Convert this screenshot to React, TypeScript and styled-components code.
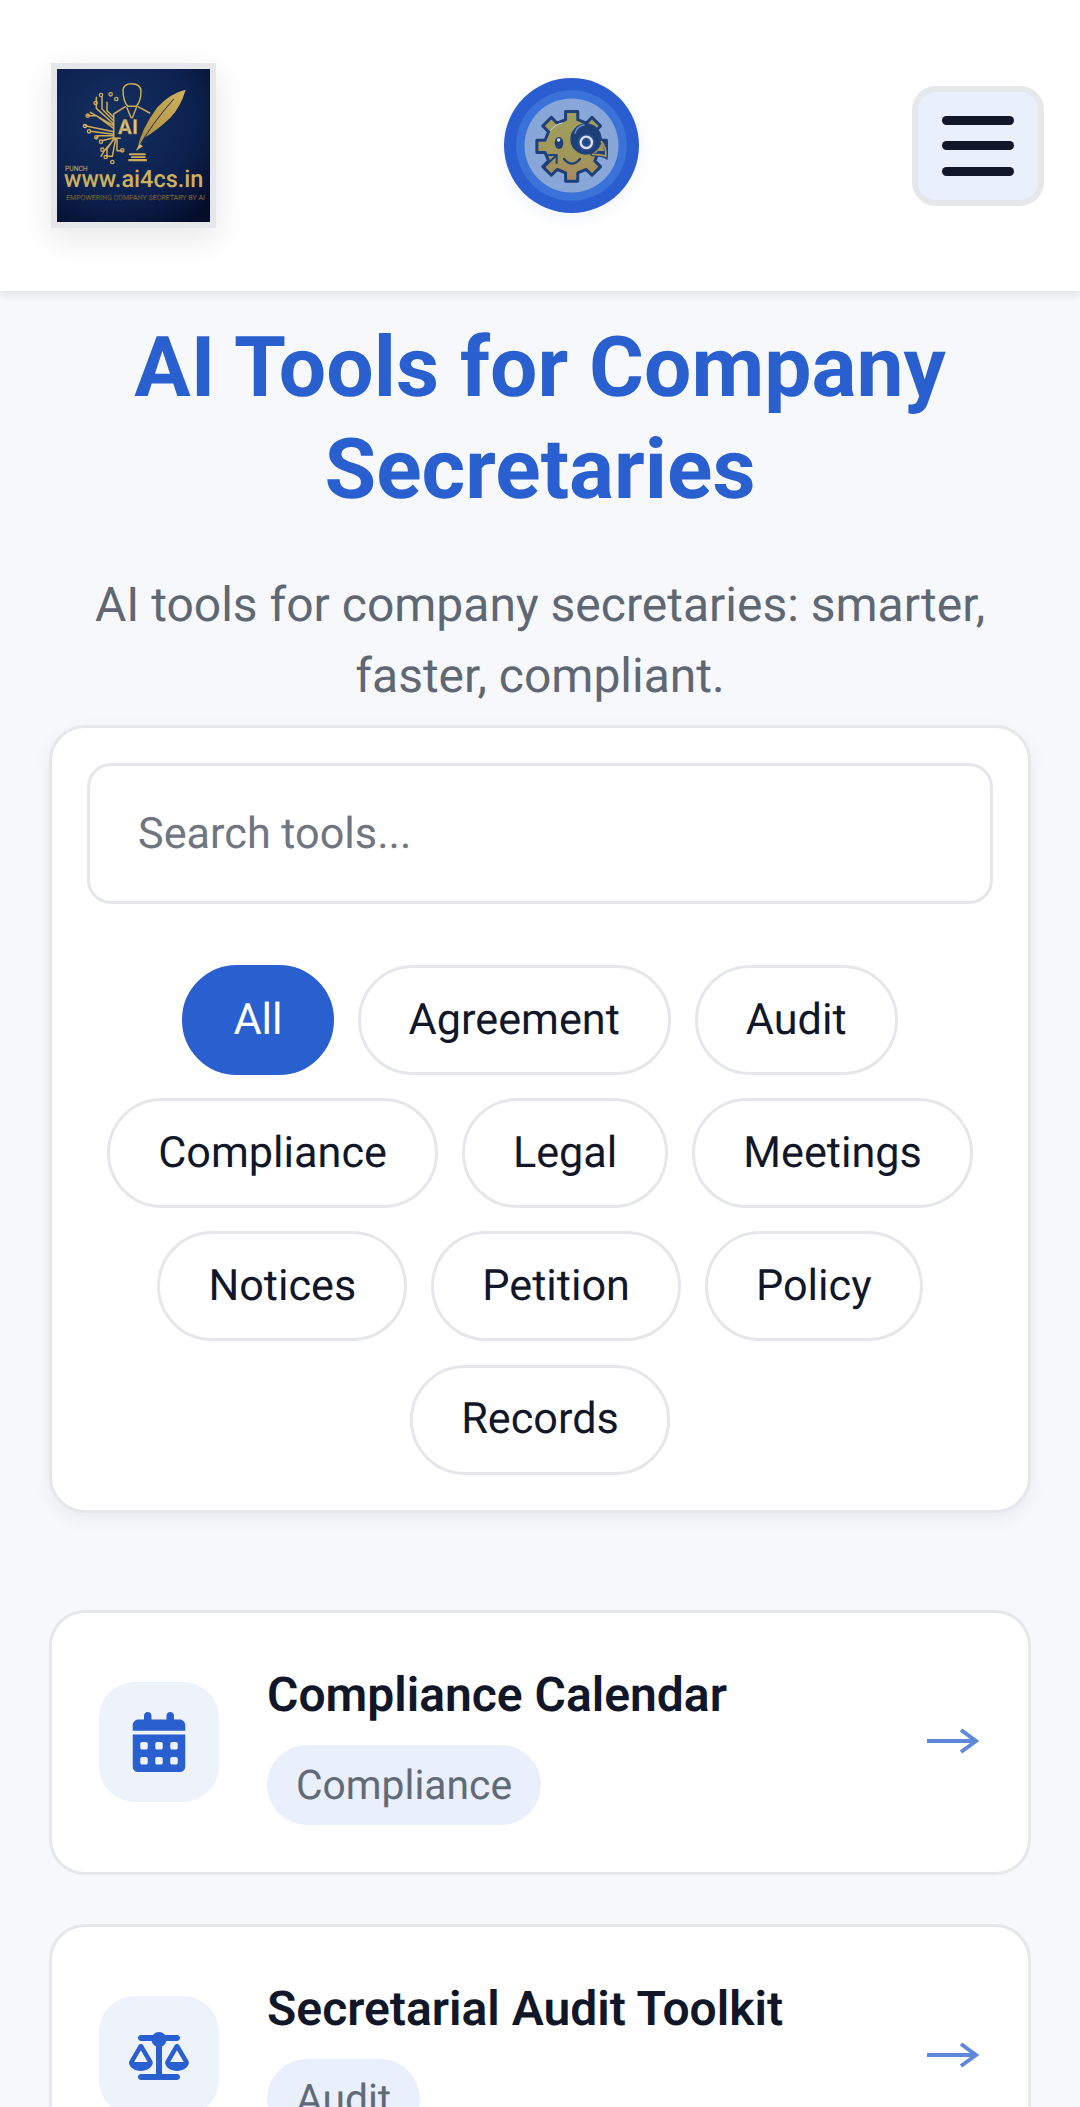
import React from "react";
import styled, { createGlobalStyle } from "styled-components";
import { FaCalendarDays, FaScaleBalanced } from "react-icons/fa6";

const Global = createGlobalStyle`
  * { box-sizing: border-box; }
  html, body { margin: 0; padding: 0; background: #f6f8fc; }
  body {
    font-family: Roboto, "Liberation Sans", sans-serif;
    color: #111827;
    text-rendering: geometricPrecision;
  }
`;

const Page = styled.div`
  width: 1080px;
  height: 2107px;
  overflow: hidden;
`;

const Header = styled.header`
  height: 291px;
  background: #fff;
  padding: 0 36px 0 51px;
  display: flex;
  align-items: center;
  justify-content: space-between;
  box-shadow: 0 3px 9px rgba(17, 24, 39, 0.1);
`;

const BrandFrame = styled.div`
  width: 165px;
  height: 165px;
  border: 6px solid #e5e7eb;
  box-shadow: 0 10px 30px rgba(17, 24, 39, 0.1);
  flex: none;
  svg { display: block; width: 153px; height: 153px; }
`;

const Mascot = styled.div`
  width: 135px;
  height: 135px;
  margin-left: 14px;
  border-radius: 50%;
  box-shadow: 0 4px 16px rgba(42, 95, 208, 0.08);
  flex: none;
  svg { display: block; width: 135px; height: 135px; }
`;

const MenuButton = styled.button`
  width: 132px;
  height: 120px;
  border: 6px solid #e5e7eb;
  border-radius: 24px;
  background: #e9effb;
  padding: 0;
  display: flex;
  flex-direction: column;
  align-items: center;
  justify-content: center;
  gap: 16.5px;
  flex: none;
`;

const MenuBar = styled.span`
  display: block;
  width: 72px;
  height: 9px;
  border-radius: 5px;
  background: #111729;
`;

const Main = styled.main`
  padding: 26px 49px 0;
`;

const Title = styled.h1`
  margin: 0 0 48px;
  font-size: 84px;
  line-height: 102px;
  font-weight: 700;
  text-align: center;
  color: #2a5fd0;
`;

const Subtitle = styled.p`
  margin: 0 0 14px;
  font-size: 48px;
  line-height: 71px;
  font-weight: 400;
  text-align: center;
  color: #5f6773;
`;

const FilterCard = styled.section`
  background: #fff;
  border: 3px solid #e5e7eb;
  border-radius: 36px;
  padding: 35px;
  box-shadow: 0 6px 18px rgba(17, 24, 39, 0.06);
`;

const Search = styled.input`
  display: block;
  width: 100%;
  height: 141px;
  border: 3px solid #e5e7eb;
  border-radius: 24px;
  background: #fff;
  padding: 0 48px;
  font-family: inherit;
  font-size: 43.2px;
  color: #111827;
  outline: none;
  text-rendering: geometricPrecision;
  &::placeholder { color: #6f7682; opacity: 1; }
`;

const Chips = styled.div`
  margin-top: 61px;
  display: flex;
  flex-wrap: wrap;
  justify-content: center;
  gap: 23.2px 24px;
`;

const Chip = styled.button<{ $active?: boolean }>`
  height: 110px;
  padding: 0 48px 2px;
  border: 3px solid ${(p) => (p.$active ? "#2a5fd0" : "#e5e7eb")};
  border-radius: 55px;
  background: ${(p) => (p.$active ? "#2a5fd0" : "#fff")};
  color: ${(p) => (p.$active ? "#fff" : "#111729")};
  font-family: inherit;
  font-size: 43.2px;
  font-weight: 400;
  text-rendering: geometricPrecision;
`;

const ToolList = styled.div`
  margin-top: 97px;
  display: flex;
  flex-direction: column;
  gap: 49px;
`;

const ToolCard = styled.article`
  height: 265px;
  flex: none;
  background: #fff;
  border: 3px solid #e5e7eb;
  border-radius: 36px;
  padding: 0 47px;
  display: flex;
  align-items: center;
  gap: 48px;
`;

const IconBox = styled.div`
  width: 120px;
  height: 120px;
  flex: none;
  border-radius: 36px;
  background: #edf2fb;
  color: #2a5fd0;
  display: flex;
  align-items: center;
  justify-content: center;
`;

const ToolBody = styled.div`
  flex: 1;
  display: flex;
  flex-direction: column;
  align-items: flex-start;
  gap: 14px;
`;

const ToolName = styled.h2`
  margin: 0;
  font-size: 48px;
  line-height: 72px;
  font-weight: 600;
  color: #111729;
`;

const Tag = styled.span`
  height: 80px;
  padding: 0 29px;
  border-radius: 40px;
  background: #e9effb;
  color: #626a77;
  font-size: 40.8px;
  display: flex;
  align-items: center;
`;

const Arrow = styled.svg`
  width: 52px;
  height: 28px;
  margin: -3px 2px 0 0;
  flex: none;
`;

const Gold = "#d0ab55";

function gearPath(cx: number, cy: number, r: number, R: number, teeth: number) {
  const pts: string[] = [];
  const step = (Math.PI * 2) / teeth;
  for (let i = 0; i < teeth; i++) {
    const a = i * step - Math.PI / 2;
    const w = step * 0.22;
    const at = (rad: number, ang: number) =>
      `${(cx + rad * Math.cos(ang)).toFixed(1)} ${(cy + rad * Math.sin(ang)).toFixed(1)}`;
    pts.push(at(r, a - w * 1.3), at(R, a - w), at(R, a + w), at(r, a + w * 1.3));
  }
  return `M${pts.join(" L")} Z`;
}

const BrandLogo = () => (
  <svg viewBox="0 0 459 459" role="img" aria-label="ai4cs logo">
    <defs>
      <radialGradient id="navy" cx="0.38" cy="0.32" r="0.85">
        <stop offset="0" stopColor="#14305f" />
        <stop offset="0.6" stopColor="#0d2150" />
        <stop offset="1" stopColor="#040d2a" />
      </radialGradient>
      <linearGradient id="quill" x1="0" y1="1" x2="1" y2="0">
        <stop offset="0" stopColor="#a88a3c" />
        <stop offset="1" stopColor="#d0b360" />
      </linearGradient>
    </defs>
    <rect width="459" height="459" fill="url(#navy)" />
    <g fill="none" stroke={Gold} strokeWidth="4.5" strokeLinecap="round" strokeLinejoin="round">
      <path d="M198 63 Q200 44 224 44 Q250 44 252 66 Q252 96 238 112 L212 112 Q198 96 198 63 Z" />
      <path d="M205 113 L170 135 L170 208 L190 208 M243 113 L278 132" />
      <path d="M210 116 L222 146 M238 116 L226 146" />
      <path d="M170 145 L150 125 L150 100 M170 155 L135 120 L135 85 M170 165 L118 118 L118 85 M170 170 L100 130 M170 178 L118 140 L92 140 M170 188 L84 170 M170 196 L100 187 M170 200 L125 200 L118 205 M170 206 L135 215 M180 208 L180 245 L195 245 M170 210 L150 240 L150 262 M176 210 L166 262 L148 262 M172 210 L142 245 L132 262" />
    </g>
    <g fill="none" stroke={Gold} strokeWidth="4">
      <circle cx="132" cy="78" r="5" /><circle cx="161" cy="76" r="5" /><circle cx="178" cy="90" r="5" />
      <circle cx="116" cy="102" r="5" /><circle cx="92" cy="140" r="5" /><circle cx="84" cy="171" r="5" />
      <circle cx="96" cy="187" r="5" /><circle cx="118" cy="205" r="5" /><circle cx="132" cy="218" r="5" />
      <circle cx="136" cy="242" r="5" /><circle cx="146" cy="264" r="5" /><circle cx="166" cy="279" r="5" />
      <circle cx="196" cy="244" r="5" />
    </g>
    <text x="183" y="194" fontFamily="Roboto, sans-serif" fontWeight="700" fontSize="62" fill="#e0c57c" stroke="#8a6d2b" strokeWidth="1">AI</text>
    <path d="M240 244 Q252 180 300 116 Q340 72 386 62 Q372 112 340 146 Q300 184 262 206 L246 238 Z" fill="url(#quill)" />
    <path d="M242 240 Q280 170 350 90" stroke="#1a2a4d" strokeWidth="3" fill="none" />
    <path d="M236 246 L248 225 L258 232 Z" fill="#d1b46b" />
    <rect x="216" y="253" width="50" height="6" rx="2" fill={Gold} />
    <rect x="222" y="262" width="44" height="5" rx="2" fill={Gold} />
    <rect x="214" y="270" width="56" height="7" rx="2" fill={Gold} />
    <text x="24" y="306" fontFamily="Roboto, sans-serif" fontSize="22" fill="#d2b468" textLength="68" lengthAdjust="spacingAndGlyphs">PUNCH</text>
    <text x="21" y="353" fontFamily="Roboto, sans-serif" fontWeight="500" fontSize="72" fill="#cdb05e" textLength="418" lengthAdjust="spacingAndGlyphs">www.ai4cs.in</text>
    <text x="27" y="394" fontFamily="Roboto, sans-serif" fontSize="21" fill="#1a160a" stroke="#a08a52" strokeWidth="0.7" textLength="417" lengthAdjust="spacingAndGlyphs">EMPOWERING COMPANY SECRETARY BY AI</text>
  </svg>
);

const MascotLogo = () => (
  <svg viewBox="132 115 405 405" role="img" aria-label="Gear mascot">
    <defs>
      <linearGradient id="gearFill" x1="0" y1="0" x2="0" y2="1">
        <stop offset="0" stopColor="#a0a05e" />
        <stop offset="0.6" stopColor="#a0985a" />
        <stop offset="1" stopColor="#a78a5e" />
      </linearGradient>
    </defs>
    <circle cx="334.5" cy="317.5" r="202.5" fill="#2a5dcf" />
    <circle cx="334.5" cy="317.5" r="166" fill="#3b72d9" />
    <circle cx="334.5" cy="317.5" r="141" fill="#88a6d8" />
    <path d={gearPath(335, 320, 82, 106, 8)} fill="url(#gearFill)" stroke="#1f3f78" strokeWidth="9" strokeLinejoin="round" />
    <path d="M272 272 Q286 254 306 250" stroke="#c9d6ea" strokeWidth="3" fill="none" strokeLinecap="round" />
    <ellipse cx="297" cy="310" rx="13" ry="18" fill="#1f3f78" />
    <circle cx="296" cy="301" r="5" fill="#dbe5f4" />
    <path d="M312 358 Q336 386 360 358" stroke="#1f3f78" strokeWidth="7" fill="none" strokeLinecap="round" />
    <path d="M250 384 L288 348 M266 346 H290 V370" stroke="#1f3f78" strokeWidth="6" fill="none" strokeLinecap="round" strokeLinejoin="round" />
    <circle cx="378" cy="298" r="47" fill="#1f3f78" />
    <path d="M345 280 Q352 258 372 256" stroke="#6f8cc0" strokeWidth="5" fill="none" strokeLinecap="round" />
    <circle cx="379" cy="308" r="26" fill="#2a4d8c" />
    <circle cx="379" cy="308" r="17" fill="none" stroke="#d9e3f2" strokeWidth="7" />
    <circle cx="379" cy="308" r="5" fill="#1f3f78" />
    <path d="M396 344 Q424 344 438 352 Q442 322 424 302" stroke="#1f3f78" strokeWidth="11" fill="none" strokeLinecap="round" />
    <path d="M398 344 Q424 344 437 350 Q440 324 424 306" stroke="#b3995a" strokeWidth="5" fill="none" strokeLinecap="round" />
  </svg>
);

const ArrowIcon = () => (
  <Arrow viewBox="0 0 52 28" fill="none" stroke="#2a5fd0" strokeOpacity="0.75" strokeWidth="4">
    <path d="M0 14 H49 M34 3 L49 14 L34 25" />
  </Arrow>
);

const categories = ["All", "Agreement", "Audit", "Compliance", "Legal", "Meetings", "Notices", "Petition", "Policy", "Records"];

export default function App() {
  return (
    <Page>
      <Global />
      <Header>
        <BrandFrame><BrandLogo /></BrandFrame>
        <Mascot><MascotLogo /></Mascot>
        <MenuButton aria-label="Menu">
          <MenuBar /><MenuBar /><MenuBar />
        </MenuButton>
      </Header>
      <Main>
        <Title>AI Tools for Company Secretaries</Title>
        <Subtitle>AI tools for company secretaries: smarter, faster, compliant.</Subtitle>
        <FilterCard>
          <Search placeholder="Search tools..." />
          <Chips>
            {categories.map((c, i) => (
              <Chip key={c} $active={i === 0}>{c}</Chip>
            ))}
          </Chips>
        </FilterCard>
        <ToolList>
          <ToolCard>
            <IconBox><FaCalendarDays size={60} /></IconBox>
            <ToolBody>
              <ToolName>Compliance Calendar</ToolName>
              <Tag>Compliance</Tag>
            </ToolBody>
            <ArrowIcon />
          </ToolCard>
          <ToolCard>
            <IconBox><FaScaleBalanced size={60} /></IconBox>
            <ToolBody>
              <ToolName>Secretarial Audit Toolkit</ToolName>
              <Tag>Audit</Tag>
            </ToolBody>
            <ArrowIcon />
          </ToolCard>
        </ToolList>
      </Main>
    </Page>
  );
}
